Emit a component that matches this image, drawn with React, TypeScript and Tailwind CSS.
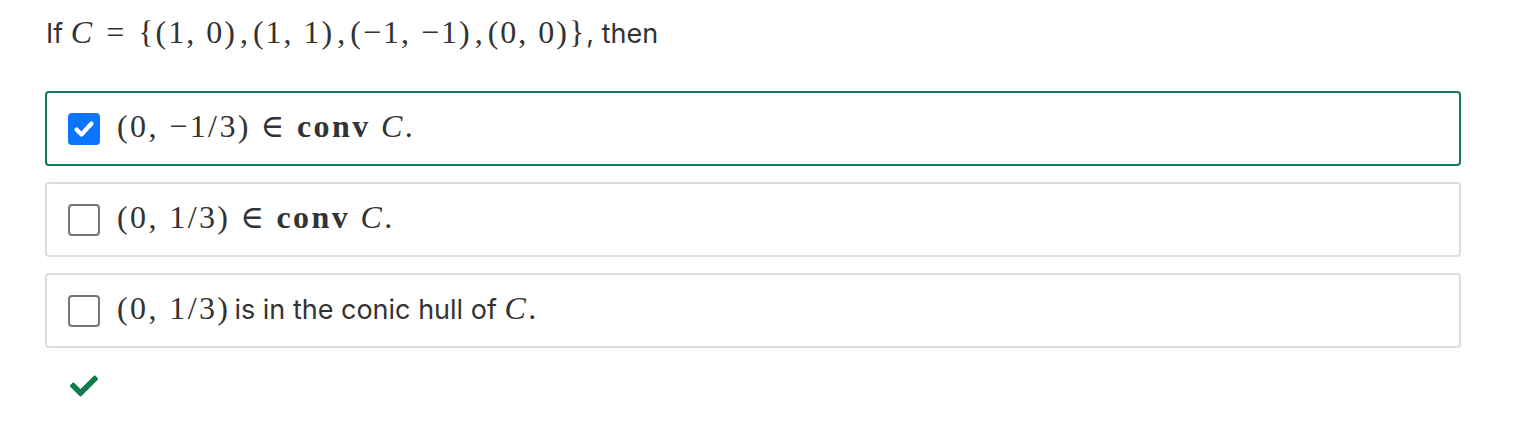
import React from "react";
import { FaCheck } from "react-icons/fa";

const serif = "[font-family:'Liberation_Serif','DejaVu_Serif',serif]";

function M({ children }: { children: React.ReactNode }) {
  return (
    <span
      className={`${serif} text-[32px] leading-none tracking-[2.4px] whitespace-nowrap`}
    >
      {children}
    </span>
  );
}

function I({ children }: { children: React.ReactNode }) {
  return <span className="italic">{children}</span>;
}

function CheckBox({ checked }: { checked: boolean }) {
  if (checked) {
    return (
      <span className="flex w-8 h-8 shrink-0 items-center justify-center rounded-[4px] bg-[#0b75ff]">
        <svg width="24" height="24" viewBox="0 0 24 24">
          <path
            d="M4.5 12.5 L9.5 17.5 L19.5 6.5"
            fill="none"
            stroke="white"
            strokeWidth="4.2"
            strokeLinecap="round"
            strokeLinejoin="round"
          />
        </svg>
      </span>
    );
  }
  return (
    <span className="block w-8 h-8 shrink-0 rounded-[4px] border-2 border-[#767676] bg-white" />
  );
}

interface Option {
  id: number;
  checked: boolean;
  body: React.ReactNode;
}

const options: Option[] = [
  {
    id: 1,
    checked: true,
    body: (
      <M>
        (0, −1/3)<span className="mx-[10px]">∈</span>
        <span className="font-bold">conv</span> <I>C</I>.
      </M>
    ),
  },
  {
    id: 2,
    checked: false,
    body: (
      <M>
        (0, 1/3)<span className="mx-[10px]">∈</span>
        <span className="font-bold">conv</span> <I>C</I>.
      </M>
    ),
  },
  {
    id: 3,
    checked: false,
    body: (
      <>
        <M>(0, 1/3)</M>
        <span className="ml-[4px]">is in the conic hull of</span>{" "}
        <M>
          <I>C</I>.
        </M>
      </>
    ),
  },
];

export default function App() {
  return (
    <div className="w-[1530px] h-[427px] bg-white text-[#333333] [font-family:'Inter','Roboto',sans-serif]">
      <div className="pl-[45px] pt-[14px] w-[1461px]">
        <p className="text-[27px] leading-[40px] pl-px">
          If{" "}
          <span
            className={`${serif} text-[32px] leading-none tracking-[2px] whitespace-nowrap`}
          >
            <I>C</I>
            <span className="mx-[12px]">=</span>
            {"{"}(1, 0)<span className="ml-[3px]">,</span>
            <span className="ml-[3px]">(1, 1)</span>
            <span className="ml-[3px]">,</span>
            <span className="ml-[3px]">(−1, −1)</span>
            <span className="ml-[3px]">,</span>
            <span className="ml-[3px]">(0, 0)</span>
            {"}"}
          </span>
          , then
        </p>

        <div className="mt-[37px] flex flex-col gap-4">
          {options.map((o) => (
            <label
              key={o.id}
              className={`flex h-[75px] items-center gap-[17px] pl-[21px] rounded-[4px] border-2 ${
                o.checked ? "border-[#127c4e]" : "border-[#dddddd]"
              } text-[27px]`}
            >
              <CheckBox checked={o.checked} />
              <span>{o.body}</span>
            </label>
          ))}
        </div>

        <div className="mt-[24px] pl-[25px] text-[#127c4e]">
          <FaCheck size={28} />
        </div>
      </div>
    </div>
  );
}
